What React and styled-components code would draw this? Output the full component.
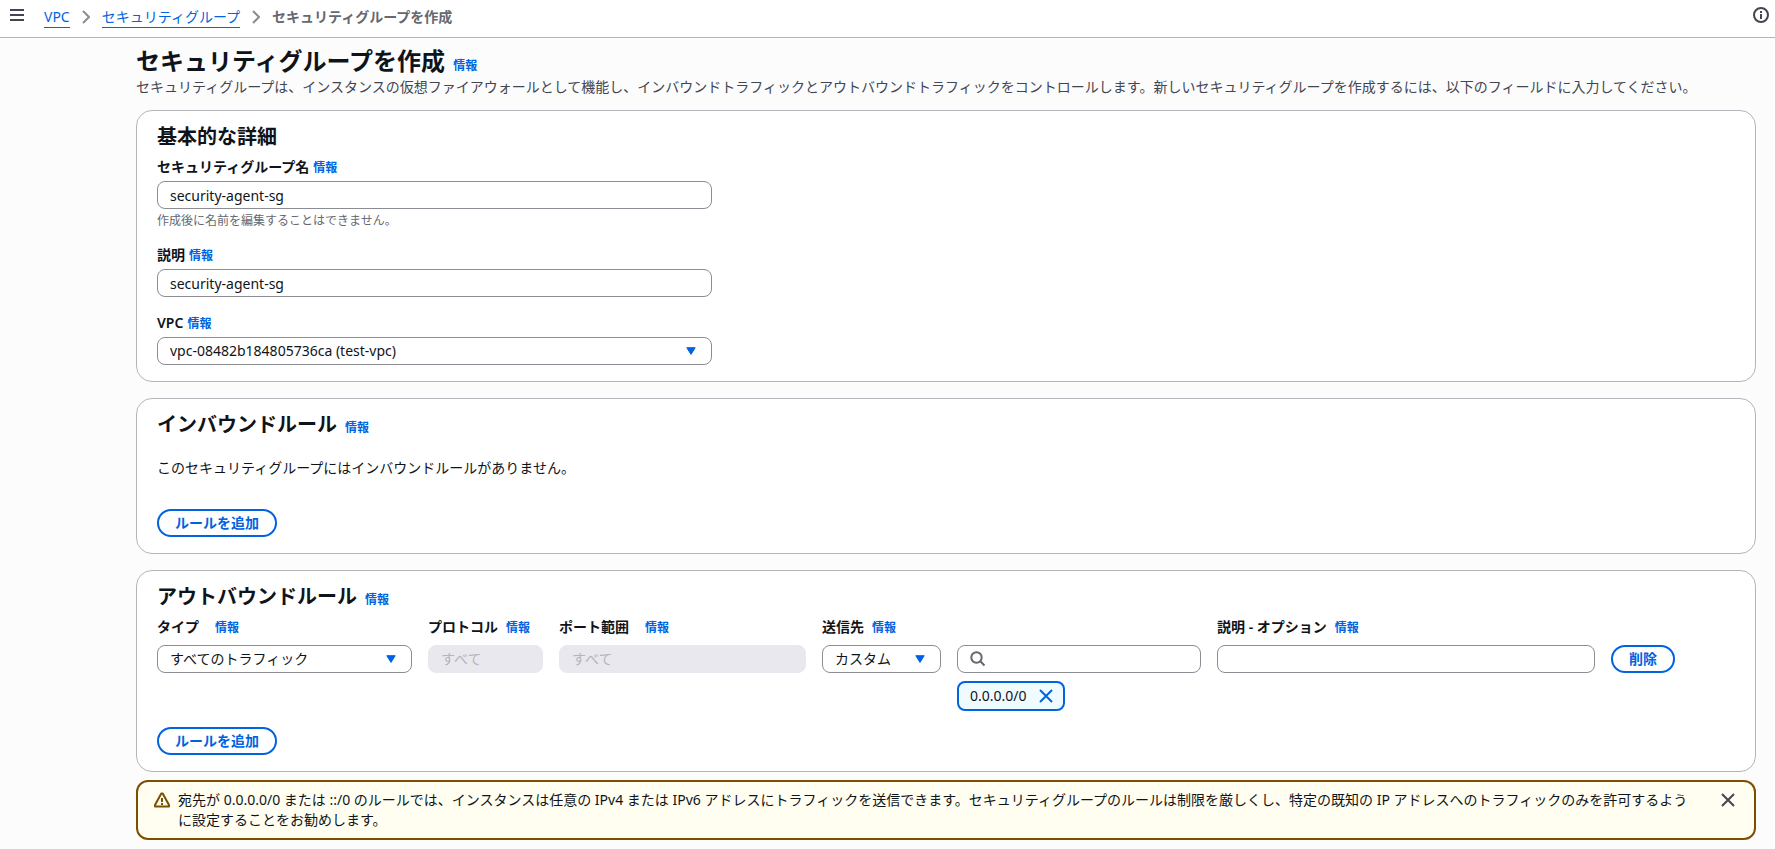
import React, { useState } from 'react';
import styled, { createGlobalStyle } from 'styled-components';

const GlobalStyle = createGlobalStyle`
  * {
    box-sizing: border-box;
  }

  body {
    margin: 0;
    background: #fcfcfd;
    color: #0f141a;
    font-family: 'Noto Sans', 'Noto Sans CJK JP', sans-serif;
    font-size: 14px;
    line-height: 20px;
  }

  button, input, select {
    font-family: inherit;
    font-size: inherit;
    line-height: inherit;
    color: inherit;
  }
`;

const ChevronIcon = () => (
  <svg width="8" height="14" viewBox="0 0 8 14" fill="none" stroke="#8c8c94" strokeWidth="2" aria-hidden="true">
    <path d="M1 1l6 6-6 6" />
  </svg>
);

const MenuIcon = () => (
  <svg width="14" height="12" viewBox="0 0 14 12" fill="none" stroke="#424650" strokeWidth="2" aria-hidden="true">
    <path d="M0 1h14M0 6h14M0 11h14" />
  </svg>
);

const InfoIcon = () => (
  <svg width="16" height="16" viewBox="0 0 16 16" fill="none" stroke="#424650" strokeWidth="2" aria-hidden="true">
    <circle cx="8" cy="8" r="7" />
    <path d="M8 7v5M8 4v2" />
  </svg>
);

const CaretIcon = () => (
  <svg width="10" height="8" viewBox="0 0 10 8" aria-hidden="true">
    <path d="M.8.7h8.4L5 7.4z" fill="#0063e0" stroke="#0063e0" strokeLinejoin="round" />
  </svg>
);

const SearchIcon = () => (
  <svg width="16" height="16" viewBox="0 0 16 16" fill="none" stroke="#656871" strokeWidth="2" aria-hidden="true">
    <circle cx="6.5" cy="6.5" r="5.2" />
    <path d="M10.3 10.3l4.2 4.2" />
  </svg>
);

const CloseIcon = () => (
  <svg width="14" height="14" viewBox="0 0 14 14" fill="none" stroke="currentColor" strokeWidth="2" aria-hidden="true">
    <path d="M1 1l12 12M13 1L1 13" />
  </svg>
);

const WarningIcon = () => (
  <svg width="16" height="16" viewBox="0 0 16 16" fill="none" stroke="currentColor" strokeWidth="2" strokeLinejoin="round" aria-hidden="true">
    <path d="M7.3 1.4h1.4L15 13v1.5H1V13z" />
    <path d="M8 6v4M8 11v2" />
  </svg>
);

const Info = () => <InfoLink href="#info">情報</InfoLink>;

const SelectBox = ({ id, label, options }) => (
  <SelectWrap>
    <Select id={id} aria-label={label}>
      {options.map((option) => (
        <option key={option}>{option}</option>
      ))}
    </Select>
    <Caret>
      <CaretIcon />
    </Caret>
  </SelectWrap>
);

const BasicDetails = () => {
  const [name, setName] = useState('security-agent-sg');
  const [description, setDescription] = useState('security-agent-sg');

  return (
    <Panel>
      <PanelTitle>基本的な詳細</PanelTitle>
      <Fields>
        <Field>
          <LabelRow $gap={4}>
            <Label htmlFor="group-name">セキュリティグループ名</Label>
            <Info />
          </LabelRow>
          <Input id="group-name" value={name} onChange={(e) => setName(e.target.value)} />
          <Hint>作成後に名前を編集することはできません。</Hint>
        </Field>
        <Field>
          <LabelRow $gap={4}>
            <Label htmlFor="group-description">説明</Label>
            <Info />
          </LabelRow>
          <Input id="group-description" value={description} onChange={(e) => setDescription(e.target.value)} />
        </Field>
        <Field>
          <LabelRow $gap={4}>
            <Label htmlFor="vpc">VPC</Label>
            <Info />
          </LabelRow>
          <SelectBox id="vpc" options={['vpc-08482b184805736ca (test-vpc)']} />
        </Field>
      </Fields>
    </Panel>
  );
};

const InboundRules = () => (
  <Panel>
    <TitleRow>
      <PanelTitle>インバウンドルール</PanelTitle>
      <Info />
    </TitleRow>
    <EmptyText>このセキュリティグループにはインバウンドルールがありません。</EmptyText>
    <Button type="button">ルールを追加</Button>
  </Panel>
);

const OutboundRules = () => (
  <Panel>
    <TitleRow>
      <PanelTitle>アウトバウンドルール</PanelTitle>
      <Info />
    </TitleRow>
    <RuleGrid>
      <RuleField>
        <LabelRow $gap={16}>
          <Label htmlFor="rule-type">タイプ</Label>
          <Info />
        </LabelRow>
        <SelectBox id="rule-type" options={['すべてのトラフィック']} />
      </RuleField>
      <RuleField>
        <LabelRow $gap={8}>
          <Label htmlFor="rule-protocol">プロトコル</Label>
          <Info />
        </LabelRow>
        <Input id="rule-protocol" defaultValue="すべて" disabled />
      </RuleField>
      <RuleField>
        <LabelRow $gap={16}>
          <Label htmlFor="rule-port">ポート範囲</Label>
          <Info />
        </LabelRow>
        <Input id="rule-port" defaultValue="すべて" disabled />
      </RuleField>
      <RuleField>
        <LabelRow $gap={8}>
          <Label htmlFor="rule-destination">送信先</Label>
          <Info />
        </LabelRow>
        <Destination>
          <SelectBox id="rule-destination" options={['カスタム']} />
          <DestinationValue>
            <SearchBox>
              <SearchIcon />
              <SearchInput type="search" aria-label="送信先" />
            </SearchBox>
            <Token>
              0.0.0.0/0
              <IconButton type="button" aria-label="削除" $color="#0063e0">
                <CloseIcon />
              </IconButton>
            </Token>
          </DestinationValue>
        </Destination>
      </RuleField>
      <RuleField>
        <LabelRow $gap={8}>
          <Label htmlFor="rule-description">説明 - オプション</Label>
          <Info />
        </LabelRow>
        <Input id="rule-description" />
      </RuleField>
      <RuleAction>
        <Button type="button">削除</Button>
      </RuleAction>
    </RuleGrid>
    <Button type="button">ルールを追加</Button>
  </Panel>
);

const App = () => (
  <>
    <GlobalStyle />
    <TopBar>
      <IconButton type="button" aria-label="メニュー" $color="#424650">
        <MenuIcon />
      </IconButton>
      <Breadcrumbs>
        <Crumb href="#vpc">VPC</Crumb>
        <ChevronIcon />
        <Crumb href="#groups">セキュリティグループ</Crumb>
        <ChevronIcon />
        <CurrentCrumb>セキュリティグループを作成</CurrentCrumb>
      </Breadcrumbs>
      <IconButton type="button" aria-label="情報" $color="#424650">
        <InfoIcon />
      </IconButton>
    </TopBar>
    <Main>
      <TitleRow>
        <PageTitle>セキュリティグループを作成</PageTitle>
        <Info />
      </TitleRow>
      <Lead>
        セキュリティグループは、インスタンスの仮想ファイアウォールとして機能し、インバウンドトラフィックとアウトバウンドトラフィックをコントロールします。新しいセキュリティグループを作成するには、以下のフィールドに入力してください。
      </Lead>
      <Panels>
        <BasicDetails />
        <InboundRules />
        <OutboundRules />
      </Panels>
      <Alert role="alert">
        <AlertIcon>
          <WarningIcon />
        </AlertIcon>
        <AlertText>
          宛先が 0.0.0.0/0 または ::/0 のルールでは、インスタンスは任意の IPv4 または IPv6 アドレスにトラフィックを送信できます。セキュリティグループのルールは制限を厳しくし、特定の既知の IP アドレスへのトラフィックのみを許可するように設定することをお勧めします。
        </AlertText>
        <AlertIcon>
          <IconButton type="button" aria-label="閉じる" $color="#424650">
            <CloseIcon />
          </IconButton>
        </AlertIcon>
      </Alert>
    </Main>
  </>
);

export default App;

const TopBar = styled.header`
  display: flex;
  align-items: center;
  height: 38px;
  padding: 0 6px 7px 10px;
  background: #fff;
  border-bottom: 1px solid #b4b4bb;
`;

const Breadcrumbs = styled.nav`
  display: flex;
  align-items: center;
  gap: 12px;
  flex: 1;
  margin: 4px 20px 0;
`;

const Crumb = styled.a`
  color: #0063e0;
  text-decoration: none;
  border-bottom: 1px solid #0063e0;
`;

const CurrentCrumb = styled.span`
  color: #656871;
  font-weight: 700;
`;

const IconButton = styled.button`
  display: flex;
  padding: 0;
  border: none;
  background: none;
  color: ${({ $color }) => $color};
  cursor: pointer;
`;

const Main = styled.main`
  padding: 8px 19px 9px 136px;
`;

const TitleRow = styled.div`
  display: flex;
  align-items: baseline;
  gap: 8px;
`;

const PageTitle = styled.h1`
  margin: 0;
  font-size: 24px;
  line-height: 30px;
  font-weight: 600;
`;

const Lead = styled.p`
  margin: 1px 0 13px;
  color: #424650;
`;

const InfoLink = styled.a`
  color: #0063e0;
  font-size: 12px;
  line-height: 16px;
  font-weight: 600;
  text-decoration: none;
`;

const Panels = styled.div`
  display: flex;
  flex-direction: column;
  gap: 16px;
`;

const Panel = styled.section`
  padding: 14px 20px 16px;
  background: #fff;
  border: 1px solid #b4b4bb;
  border-radius: 16px;
`;

const PanelTitle = styled.h2`
  margin: 0;
  font-size: 20px;
  line-height: 24px;
  font-weight: 600;
`;

const Fields = styled.div`
  display: flex;
  flex-direction: column;
  gap: 16px;
  max-width: 555px;
  margin-top: 8px;
`;

const Field = styled.div`
  display: flex;
  flex-direction: column;
  gap: 4px;
`;

const LabelRow = styled.div`
  display: flex;
  align-items: baseline;
  height: 20px;
  gap: ${({ $gap }) => $gap}px;
`;

const Label = styled.label`
  font-weight: 600;
  white-space: nowrap;
`;

const Input = styled.input`
  width: 100%;
  height: 28px;
  padding: 0 12px;
  border: 1px solid #8c8c94;
  border-radius: 8px;
  background: #fff;
  outline: none;

  &:disabled {
    padding-bottom: 2px;
    border-color: #e9e8ee;
    background: #e9e8ee;
    color: #b4b4bb;
  }
`;

const Hint = styled.div`
  color: #656871;
  font-size: 12px;
  line-height: 16px;
`;

const SelectWrap = styled.div`
  position: relative;
`;

const Select = styled.select`
  display: block;
  width: 100%;
  height: 28px;
  padding: 0 32px 0 12px;
  border: 1px solid #8c8c94;
  border-radius: 8px;
  background: #fff;
  appearance: none;
  outline: none;
`;

const Caret = styled.span`
  position: absolute;
  top: 10px;
  right: 16px;
  display: flex;
  pointer-events: none;
`;

const EmptyText = styled.p`
  margin: 21px 0 31px;
`;

const Button = styled.button`
  display: block;
  height: 28px;
  padding: 0 16px;
  border: 2px solid #0063e0;
  border-radius: 14px;
  background: #fff;
  color: #0063e0;
  font-weight: 600;
  white-space: nowrap;
  cursor: pointer;
`;

const RuleGrid = styled.div`
  display: grid;
  grid-template-columns:
    minmax(0, 255fr) minmax(0, 115fr) minmax(0, 247fr)
    minmax(0, 379fr) minmax(0, 378fr) minmax(0, 124fr);
  column-gap: 16px;
  margin: 8px 0 16px;
`;

const RuleField = styled.div`
  display: flex;
  flex-direction: column;
  gap: 8px;
`;

const RuleAction = styled.div`
  padding-top: 28px;
`;

const Destination = styled.div`
  display: grid;
  grid-template-columns: minmax(0, 119fr) minmax(0, 244fr);
  column-gap: 16px;
`;

const DestinationValue = styled.div`
  display: flex;
  flex-direction: column;
  align-items: flex-start;
  gap: 8px;
`;

const SearchBox = styled.div`
  display: flex;
  align-items: center;
  gap: 8px;
  width: 100%;
  height: 28px;
  padding: 0 12px;
  border: 1px solid #8c8c94;
  border-radius: 8px;
  background: #fff;
`;

const SearchInput = styled.input`
  flex: 1;
  min-width: 0;
  border: none;
  background: transparent;
  outline: none;
`;

const Token = styled.div`
  display: flex;
  align-items: center;
  gap: 12px;
  height: 30px;
  padding: 0 10px 0 11px;
  border: 2px solid #0063e0;
  border-radius: 8px;
  background: #f0fbff;
`;

const Alert = styled.div`
  display: flex;
  align-items: flex-start;
  gap: 8px;
  margin-top: 8px;
  padding: 8px 19px 8px 16px;
  border: 2px solid #7c4f00;
  border-radius: 12px;
  background: #fffef0;
`;

const AlertIcon = styled.span`
  display: flex;
  align-items: center;
  height: 20px;
  color: #7c4f00;
`;

const AlertText = styled.p`
  flex: 1;
  margin: 0;
  padding-right: 20px;
`;
